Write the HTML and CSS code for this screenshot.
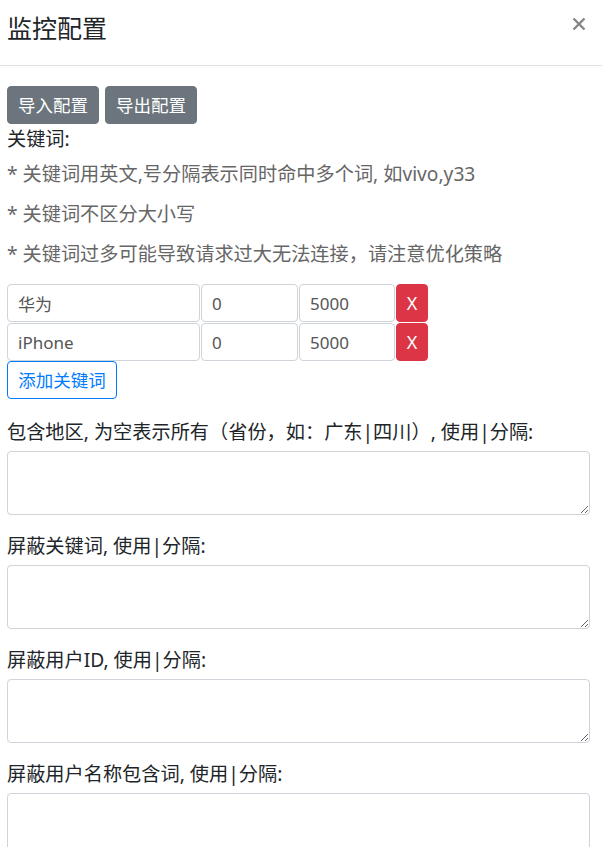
FILE: index.html
```html
<!DOCTYPE html>
<html lang="zh-CN">
<head>
<meta charset="utf-8">
<title>监控配置</title>
<link rel="stylesheet" href="styles.css">
</head>
<body>
<div class="modal">
  <div class="modal-header">
    <h4 class="modal-title">监控配置</h4>
    <button class="close" type="button" aria-label="Close">
      <svg width="14" height="14" viewBox="0 0 14 14"><path d="M1.5 1.5 L12.5 12.5 M12.5 1.5 L1.5 12.5" stroke="#858585" stroke-width="2.4" stroke-linecap="butt"/></svg>
    </button>
  </div>
  <div class="modal-body">
    <div class="btn-row">
      <button class="btn btn-secondary" type="button">导入配置</button>
      <button class="btn btn-secondary" type="button">导出配置</button>
    </div>
    <div class="label">关键词:</div>
    <p class="hint">* 关键词用英文,号分隔表示同时命中多个词, 如vivo,y33</p>
    <p class="hint">* 关键词不区分大小写</p>
    <p class="hint">* 关键词过多可能导致请求过大无法连接，请注意优化策略</p>
    <div class="kw-list">
      <div class="kw-row">
        <input class="field" type="text" value="华为">
        <input class="field" type="text" value="0">
        <input class="field" type="text" value="5000">
        <button class="btn-del" type="button">X</button>
      </div>
      <div class="kw-row">
        <input class="field" type="text" value="iPhone">
        <input class="field" type="text" value="0">
        <input class="field" type="text" value="5000">
        <button class="btn-del" type="button">X</button>
      </div>
    </div>
    <button class="btn btn-outline" type="button">添加关键词</button>
    <div class="group first">
      <label class="label">包含地区, 为空表示所有（省份，如：广东|四川）, 使用|分隔:</label>
      <textarea class="area"></textarea>
    </div>
    <div class="group">
      <label class="label">屏蔽关键词, 使用|分隔:</label>
      <textarea class="area"></textarea>
    </div>
    <div class="group">
      <label class="label">屏蔽用户ID, 使用|分隔:</label>
      <textarea class="area"></textarea>
    </div>
    <div class="group">
      <label class="label">屏蔽用户名称包含词, 使用|分隔:</label>
      <textarea class="area"></textarea>
    </div>
  </div>
</div>
</body>
</html>
```

FILE: styles.css
```css
* { box-sizing: border-box; }
html, body {
  margin: 0;
  padding: 0;
  background: #fff;
}
body {
  font-family: "Noto Sans", "Noto Sans CJK SC", sans-serif;
  color: #212529;
  overflow: hidden;
}
.modal {
  width: 602px;
}
.modal-header {
  height: 66px;
  border-bottom: 1px solid #dee2e6;
  display: flex;
  justify-content: space-between;
  align-items: flex-start;
  padding: 12px 16px 0 7px;
}
.modal-title {
  margin: 0;
  font-size: 25px;
  line-height: 30px;
  font-weight: 400;
  color: #212529;
  font-family: "Noto Sans CJK SC", sans-serif;
}
.close {
  border: 0;
  background: transparent;
  padding: 0;
  margin-top: 5px;
  width: 14px;
  height: 14px;
  display: block;
}
.close svg { display: block; }
.modal-body {
  padding: 20px 12px 0 7px;
}
.btn-row {
  display: flex;
  gap: 6px;
}
.btn {
  height: 38px;
  padding: 0 10px;
  font-family: "Noto Sans CJK SC", sans-serif;
  font-size: 17.5px;
  line-height: 36px;
  border-radius: 4px;
  border: 1px solid transparent;
  cursor: pointer;
}
.btn-secondary {
  background: #6c757d;
  border-color: #6c757d;
  color: #fff;
  width: 92px;
}
.btn-outline {
  background: #fff;
  border-color: #007bff;
  color: #007bff;
  width: 110px;
  display: block;
}
.label {
  display: block;
  font-size: 19.2px;
  line-height: 30px;
  color: #212529;
}
.hint {
  margin: 0;
  font-size: 19.2px;
  line-height: 40px;
  color: #666;
}
.kw-list {
  margin-top: 10px;
  display: flex;
  flex-direction: column;
  gap: 1px;
}
.kw-row {
  display: grid;
  grid-template-columns: 193px 97px 96px 32px;
  column-gap: 1px;
  height: 38px;
}
.field {
  height: 38px;
  border: 1px solid #ced4da;
  border-radius: 4px;
  padding: 0 10px;
  font-family: "Noto Sans", "Noto Sans CJK SC", sans-serif;
  font-size: 17px;
  color: #555;
  background: #fff;
  width: 100%;
}
.btn-del {
  height: 38px;
  border: 1px solid #dc3545;
  background: #dc3545;
  color: #fff;
  border-radius: 4px;
  padding: 0;
  font-family: "Noto Sans", sans-serif;
  font-size: 18px;
}
.group {
  margin-bottom: 16px;
}
.group.first {
  margin-top: 18px;
}
.group .label {
  margin-bottom: 4px;
}
.area {
  display: block;
  width: 100%;
  height: 64px;
  border: 1px solid #ced4da;
  border-radius: 4px;
  background: #fff;
  margin: 0;
  resize: vertical;
}
```
